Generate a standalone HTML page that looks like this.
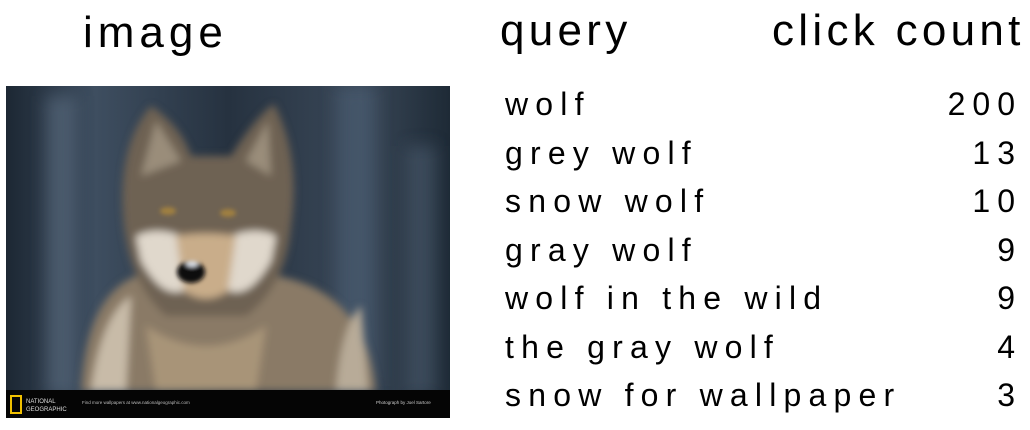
<!DOCTYPE html>
<html><head><meta charset="utf-8"><style>
html,body{margin:0;padding:0;background:#fff;width:1030px;height:430px;overflow:hidden;position:relative;font-family:"Liberation Sans",Arial,sans-serif;color:#000}
.t{position:absolute;line-height:1;white-space:nowrap}
.h{font-size:44px;letter-spacing:4.3px}
.r{font-size:32px;letter-spacing:7.2px}
.n{font-size:32px;letter-spacing:7px;right:8px;text-align:right}
</style></head><body>
<div class="t h" style="left:83px;top:11px;letter-spacing:5px">image</div>
<div class="t h" style="left:500px;top:9px">query</div>
<div class="t h" style="left:772px;top:9px">click count</div>

<div class="t r" style="left:505px;top:88px">wolf</div>
<div class="t r" style="left:505px;top:137px">grey wolf</div>
<div class="t r" style="left:505px;top:185px">snow wolf</div>
<div class="t r" style="left:505px;top:234px">gray wolf</div>
<div class="t r" style="left:505px;top:282px">wolf in the wild</div>
<div class="t r" style="left:505px;top:331px">the gray wolf</div>
<div class="t r" style="left:505px;top:379px">snow for wallpaper</div>

<div class="t n" style="top:88px">200</div>
<div class="t n" style="top:137px">13</div>
<div class="t n" style="top:185px">10</div>
<div class="t n" style="top:234px">9</div>
<div class="t n" style="top:282px">9</div>
<div class="t n" style="top:331px">4</div>
<div class="t n" style="top:379px">3</div>

<svg style="position:absolute;left:6px;top:86px" width="444" height="332" viewBox="0 0 444 332">
<defs>
<filter id="b8"><feGaussianBlur stdDeviation="8"/></filter>
<filter id="b4"><feGaussianBlur stdDeviation="4"/></filter>
<filter id="b2"><feGaussianBlur stdDeviation="2"/></filter>
<linearGradient id="bg" x1="0" y1="0" x2="1" y2="0">
<stop offset="0" stop-color="#1c2733"/><stop offset="0.2" stop-color="#3e4e60"/><stop offset="0.5" stop-color="#263240"/><stop offset="0.8" stop-color="#3a4858"/><stop offset="1" stop-color="#1e2a36"/></linearGradient>
</defs>
<rect width="444" height="332" fill="url(#bg)"/>
<g filter="url(#b8)">
<rect x="40" y="10" width="30" height="300" fill="#5a6c80" opacity=".6"/>
<rect x="330" y="0" width="40" height="300" fill="#50627a" opacity=".5"/>
<rect x="400" y="60" width="30" height="250" fill="#506074" opacity=".5"/>
</g>
<g filter="url(#b4)">
<path d="M75 305 Q80 210 130 190 L270 190 Q360 205 370 305 Z" fill="#8a7a66"/>
<path d="M85 305 Q95 230 125 210 L120 305Z" fill="#c8bba8"/>
<path d="M330 305 Q335 240 355 220 L362 305Z" fill="#b8ab98"/>
<path d="M118 140 Q110 60 145 20 Q175 40 185 70 L225 70 Q250 30 268 18 Q295 70 285 140 Q280 200 240 230 L160 230 Q125 200 118 140Z" fill="#6e6252"/>
<path d="M135 90 L150 35 L175 75Z" fill="#9a8d7a"/>
<path d="M265 90 L262 35 L240 75Z" fill="#9a8d7a"/>
<path d="M130 150 Q150 140 175 150 L185 200 Q160 220 135 175Z" fill="#e0d8cc"/>
<path d="M270 150 Q250 140 225 150 L215 200 Q240 220 265 175Z" fill="#e0d8cc"/>
<path d="M170 150 Q200 145 230 150 L222 205 Q200 220 178 205Z" fill="#c9ad8a"/>
<path d="M140 240 Q200 280 260 240 L250 305 L150 305Z" fill="#a89478"/>
</g>
<g filter="url(#b2)">
<ellipse cx="162" cy="125" rx="8" ry="4" fill="#a08040"/>
<ellipse cx="222" cy="127" rx="8" ry="4" fill="#a08040"/>
<ellipse cx="185" cy="186" rx="14" ry="11" fill="#0a0a0e"/>
<ellipse cx="186" cy="178" rx="6" ry="3" fill="#d8dde5"/>
</g>
<rect x="0" y="304" width="444" height="28" fill="#050505"/>
<rect x="5" y="310" width="10" height="17" fill="none" stroke="#f0c000" stroke-width="2"/>
<text x="20" y="317" font-size="6" fill="#ddd" font-family="Liberation Sans">NATIONAL</text>
<text x="20" y="325" font-size="6" fill="#ddd" font-family="Liberation Sans">GEOGRAPHIC</text>
<text x="76" y="318" font-size="4.5" fill="#bbb" font-family="Liberation Sans">Find more wallpapers at www.nationalgeographic.com</text>
<text x="370" y="318" font-size="4.5" fill="#ccc" font-family="Liberation Sans">Photograph by Joel Sartore</text>
</svg>
</body></html>
